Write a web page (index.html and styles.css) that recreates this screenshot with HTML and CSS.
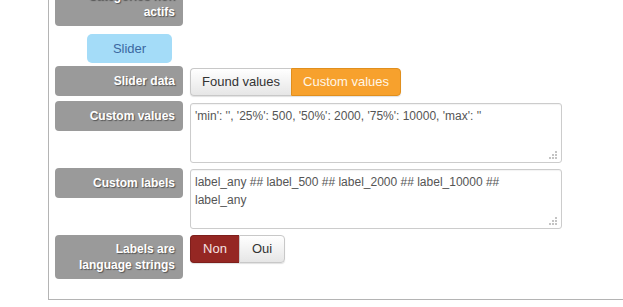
FILE: index.html
```html
<!DOCTYPE html>
<html>
<head lang="fr">
    <meta charset="UTF-8">
    <title>Slider</title>
    <link rel="stylesheet" href="styles.css">
</head>
<body>
<div class="panel">
    <div class="row">
        <div class="label two">Catégories non<br>actifs</div>
    </div>

    <div class="row slider-row">
        <span class="tag">Slider</span>
    </div>

    <div class="row">
        <div class="label">Slider data</div>
        <div class="btn-group first">
            <span class="btn">Found values</span>
            <span class="btn orange">Custom values</span>
        </div>
    </div>

    <div class="row">
        <div class="label">Custom values</div>
        <div class="area first">
            <textarea>'min': '', '25%': 500, '50%': 2000, '75%': 10000, 'max': ''</textarea>
            <span class="grip"></span>
        </div>
    </div>

    <div class="row">
        <div class="label">Custom labels</div>
        <div class="area">
            <textarea>label_any ## label_500 ## label_2000 ## label_10000 ##
label_any</textarea>
            <span class="grip"></span>
        </div>
    </div>

    <div class="row last">
        <div class="label two">Labels are<br>language strings</div>
        <div class="btn-group">
            <span class="btn red">Non</span>
            <span class="btn oui">Oui</span>
        </div>
    </div>
</div>
</body>
</html>
```

FILE: styles.css
```css
*{
    margin: 0;
    padding: 0;
    box-sizing: border-box;
}
html, body{
    overflow: hidden;
    background: #fff;
}
body{
    font-family: "Liberation Sans", Arial, sans-serif;
    font-size: 12px;
    color: #555;
}
.panel{
    margin-left: 48px;
    margin-top: -18px;
    border-left: 1px solid #b4b4b4;
    border-bottom: 1px solid #b4b4b4;
    padding: 0 0 20px 6px;
    display: flex;
    flex-direction: column;
    gap: 5px;
}
.row{
    display: flex;
    align-items: flex-start;
    gap: 7px;
}
.row.last{
    margin-top: 1px;
}
.label{
    width: 128px;
    height: 30px;
    flex: none;
    background: #9a9a9a;
    border-radius: 4px;
    color: #fff;
    font-weight: bold;
    font-size: 12px;
    text-align: right;
    padding-right: 8px;
    line-height: 30px;
    text-shadow: 1px 1px 1px #555;
}
.label.two{
    height: 44px;
    line-height: 16px;
    padding-top: 6px;
}
.slider-row{
    padding-left: 32px;
    margin-top: 3px;
    margin-bottom: -2px;
}
.tag{
    display: block;
    width: 85px;
    height: 29px;
    line-height: 29px;
    text-align: center;
    background: #a4dcf8;
    border-radius: 5px;
    color: #3b68a0;
    font-size: 13px;
}
.btn-group{
    display: flex;
    border-radius: 4px;
    box-shadow: 0 1px 1px rgba(0,0,0,0.12);
}
.btn-group.first{
    margin-top: 2px;
}
.btn{
    display: block;
    height: 28px;
    line-height: 26px;
    padding: 0 11px;
    font-size: 13px;
    color: #333;
    white-space: nowrap;
    border: 1px solid #c8c8c8;
    background: linear-gradient(#ffffff, #e6e6e6);
}
.btn:first-child{
    border-radius: 4px 0 0 4px;
    border-right: none;
}
.btn:last-child{
    border-radius: 0 4px 4px 0;
}
.btn.orange{
    background: #f7a12d;
    border-color: #e08f1e;
    color: #fff6e6;
}
.btn.red{
    width: 49px;
    padding: 0;
    text-align: center;
    background: #952723;
    border-color: #7e1f1c;
    color: #f5e4e4;
}
.btn.oui{
    width: 46px;
    padding: 0;
    text-align: center;
}
.area{
    position: relative;
    margin-top: 1px;
}
.area.first{
    margin-top: 2px;
}
.area textarea{
    display: block;
    width: 372px;
    height: 60px;
    border: 1px solid #ccc;
    border-radius: 3px;
    padding: 3px 4px;
    font-family: "Liberation Sans", Arial, sans-serif;
    font-size: 12px;
    line-height: 18px;
    color: #555;
    resize: none;
    overflow: hidden;
    box-shadow: inset 0 1px 1px rgba(0,0,0,0.05);
}
.grip{
    position: absolute;
    right: 5px;
    bottom: 4px;
    width: 2px;
    height: 2px;
    background: #c4c4c4;
    box-shadow: 0 -3px #c4c4c4, 0 -6px #c4c4c4, -3px 0 #c4c4c4, -3px -3px #c4c4c4, -6px 0 #c4c4c4;
}
```
